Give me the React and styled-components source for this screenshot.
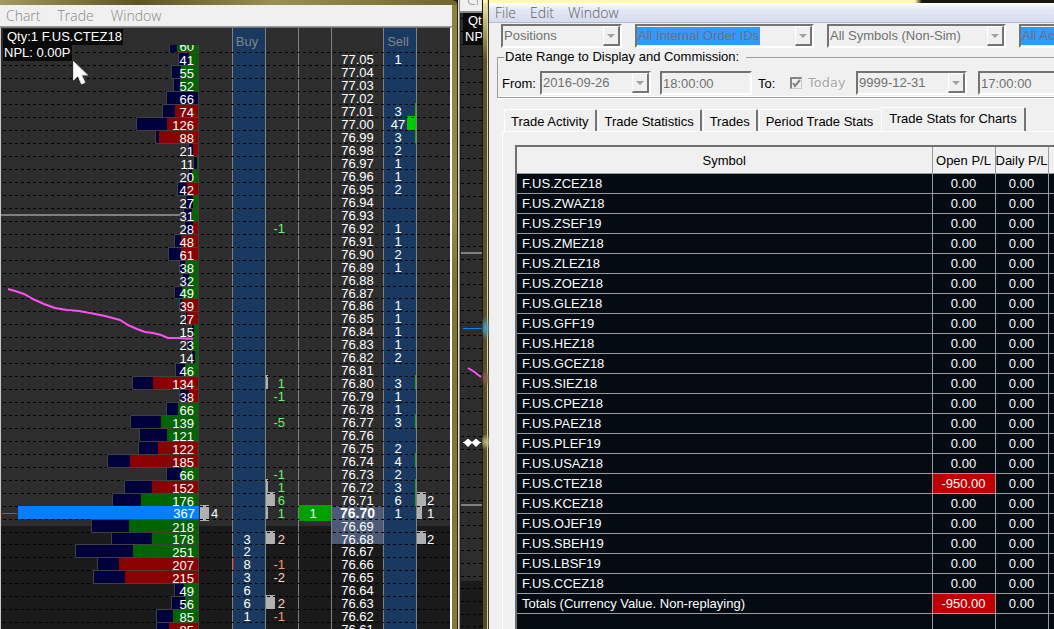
import React from "react";
import styled, { createGlobalStyle, css } from "styled-components";

const GlobalStyle = createGlobalStyle`
  * {
    box-sizing: border-box;
  }
  body {
    margin: 0;
    overflow: hidden;
    background: #1a1a1a;
    font-family: "Liberation Sans", Arial, sans-serif;
    font-size: 13px;
    color: #000;
  }
`;

const Desktop = styled.div`
  display: grid;
  grid-template-columns: 458fr 24px 572fr;
  height: 100vh;
`;

/* ---------- chart window ---------- */

const ChartWindow = styled.section`
  display: flex;
  flex-direction: column;
  min-width: 0;
  height: 100vh;
  overflow: hidden;
  padding: 5px 6px 0 0;
  border-radius: 0 6px 0 0;
  background:
    linear-gradient(90deg, transparent calc(100% - 1px), #2b2612 0),
    linear-gradient(90deg, #a49a5c, #5d5420 30%, #9a9050 60%, #70662a) 0 0 / 100% 5px no-repeat,
    linear-gradient(#8a803f, #958a4a 35%, #7d732f 45%, #857a35);
`;

const MenuBar = styled.nav`
  display: flex;
  align-items: center;
  gap: ${(p) => p.$gap}px;
  flex: none;
  height: ${(p) => p.$height}px;
  padding: 0 6px;
  background: ${(p) => p.$background};
  border-bottom: 1px solid ${(p) => p.$line};
`;

const MenuItem = styled.button`
  padding: 0;
  border: 0;
  background: none;
  color: ${(p) => p.$color || "#888"};
  font: 300 14px/20px "Open Sans", "Noto Sans", sans-serif;
`;

const Ladder = styled.div`
  position: relative;
  flex: 1;
  min-height: 0;
  overflow: hidden;
  border-top: 1px solid #777;
  border-left: 1px solid #c8c8c8;
  border-right: 2px solid #fff;
  background: #1a1a1a;
  color: #fff;
`;

const columns = "minmax(0, 1fr) 33px 33px 33px 52px 33px 34px";

const shades = {
  light: "#2d2d2d",
  split: "linear-gradient(#2d2d2d 7px, #1a1a1a 7px)",
  dark: "#1a1a1a",
};

const LadderRow = styled.div`
  position: relative;
  display: grid;
  grid-template-columns: ${columns};
  grid-template-rows: 100%;
  height: ${(p) => (p.$short ? 12 : 13)}px;
  line-height: 15px;
  background: ${(p) => shades[p.$shade]};
  &::after {
    content: "";
    position: absolute;
    z-index: 1;
    top: 0;
    left: 2px;
    right: 0;
    height: 1px;
    background: repeating-linear-gradient(90deg, #000 0 3px, transparent 3px 6px);
  }
`;

const LadderHead = styled.div`
  display: grid;
  grid-template-columns: ${columns};
  grid-template-rows: 100%;
  height: 24px;
  line-height: 28px;
  background: #2d2d2d;
  color: #858585;
  text-align: center;
`;

const Cell = styled.div`
  position: relative;
  border-left: 1px solid #808080;
  text-align: center;
  white-space: nowrap;
  ${(p) => p.$blue && "background: #193961;"}
  ${(p) => p.$marked && "background: #4d5a76;"}
  ${(p) => p.$nudge && `padding-right: ${p.$nudge}px;`}
`;

const VolumeCell = styled.div`
  display: flex;
  justify-content: flex-end;
  align-items: flex-end;
  padding-right: 33px;
  position: relative;
  color: #fff;
`;

const fills = { g: "#006400", r: "#8b0000" };

const Bar = styled.div`
  position: relative;
  z-index: 2;
  display: flex;
  flex: none;
  height: calc(100% + 1px);
  margin-bottom: -1px;
  border: 1px solid #404040;
  background: #00003c;
  ${(p) =>
    p.$active &&
    css`
      height: 13px;
      margin: 0;
      border: 0;
      background: #0080ff;
    `}
`;

const BarSide = styled.div`
  margin-left: auto;
  background: ${(p) => fills[p.$fill]};
`;

const BarNumber = styled.span`
  position: absolute;
  right: 4px;
  top: 0;
  line-height: ${(p) => (p.$tight ? 13 : 15)}px;
`;

const HeadClip = styled.div`
  display: flex;
  align-items: flex-end;
  height: 7px;
  overflow: hidden;
  && > div {
    height: 14px;
  }
`;

const Block = styled.i`
  position: absolute;
  top: -1px;
  ${(p) => p.$side || "left"}: 0;
  width: ${(p) => p.$width}px;
  height: 16px;
  background: ${(p) => p.$color || "#b0b0b0"};
`;

const Delta = styled.span`
  position: absolute;
  z-index: 2;
  ${(p) => (p.$left ? `left: ${p.$left}px;` : "right: 13px;")}
  color: ${(p) => p.$color || "#fff"};
`;

const Filled = styled.div`
  position: absolute;
  z-index: 2;
  inset: -1px 0;
  height: 16px;
  padding-right: 4px;
  line-height: 17px;
  background: #00a000;
`;

const Price = styled.span`
  ${(p) => p.$last && "position: relative; z-index: 2; font-size: 14px; font-weight: 700;"}
`;

const Label = styled.div`
  position: absolute;
  z-index: 3;
  top: ${(p) => p.$top}px;
  left: 2px;
  padding: 0 1px 0 ${(p) => p.$pad}px;
  background: #0a0a0a;
  color: #fff;
  line-height: 16px;
  white-space: nowrap;
`;

const Overlay = styled.svg`
  position: absolute;
  z-index: 3;
  top: 0;
  left: 0;
  pointer-events: none;
`;

// volume, width of the coloured side, colour
const volumes = [
  [41, 9, "g"], [55, 17, "g"], [52, 18, "g"], [66, 0, "g"], [74, 23, "r"],
  [126, 31, "r"], [88, 39, "r"], [21, 5, "r"], [11, 1, "g"], [20, 6, "g"],
  [42, 11, "r"], [27, 5, "g"], [31, 6, "g"], [28, 5, "r"], [48, 17, "r"],
  [61, 17, "r"], [38, 13, "g"], [32, 9, "g"], [49, 16, "g"], [39, 16, "r"],
  [27, 11, "r"], [15, 4, "g"], [23, 7, "g"], [14, 3, "g"], [46, 13, "g"],
  [134, 45, "r"], [38, 9, "r"], [66, 20, "g"], [139, 37, "g"], [121, 31, "g"],
  [122, 40, "r"], [185, 68, "r"], [66, 16, "g"], [152, 46, "r"], [176, 57, "g"],
  [367, 0, "g"], [218, 69, "g"], [178, 46, "g"], [251, 65, "g"], [207, 79, "r"],
  [215, 73, "r"], [49, 14, "g"], [56, 13, "g"], [85, 25, "g"], [85, 29, "r"],
];

const sells = {
  7705: 1, 7701: 3, 7700: 47, 7699: 3, 7698: 2, 7697: 1, 7696: 1, 7695: 2,
  7692: 1, 7691: 1, 7690: 2, 7689: 1, 7686: 1, 7685: 1, 7684: 1, 7683: 1,
  7682: 2, 7680: 3, 7679: 1, 7678: 1, 7677: 3, 7675: 2, 7674: 4, 7673: 2,
  7672: 3, 7671: 6, 7670: 1,
};

const sellMarks = {
  7701: 1, 7700: 9, 7699: 1, 7680: 1, 7677: 1, 7674: 1, 7672: 1, 7671: 1,
};

const buys = { 7668: 3, 7667: 2, 7666: 8, 7665: 3, 7664: 6, 7663: 6, 7662: 1 };

const green = "#66f266";
const peach = "#ffd2c4";
const orange = "#ff9468";

// text, colour, block width
const deltas = {
  7692: ["-1", green, 0],
  7680: ["1", green, 2],
  7679: ["-1", green, 0],
  7677: ["-5", green, 0],
  7673: ["-1", green, 0],
  7672: ["1", green, 2],
  7671: ["6", green, 9],
  7670: ["1", green, 2],
  7668: ["2", peach, 9],
  7666: ["-1", orange, 0],
  7665: ["-2", peach, 0],
  7663: ["2", peach, 9],
  7662: ["-1", orange, 0],
};

const pulls = { 7671: [2, 9], 7670: [1, 5], 7668: [2, 9] };

const Volume = ({ data: [volume, side, fill], short }) => (
  <Bar $active={volume === 367} style={{ width: Math.round(volume * 0.49) + 1 }}>
    <BarSide $fill={fill} style={{ width: side }} />
    <BarNumber $tight={short}>{volume}</BarNumber>
  </Bar>
);

const rows = volumes.map((data, i) => {
  const price = 7705 - i;
  return {
    price,
    data,
    short: price === 7687 || price === 7668,
    shade: price > 7669 ? "light" : price === 7669 ? "split" : "dark",
  };
});

const PriceLadder = () => (
  <Ladder>
    <LadderHead>
      <VolumeCell>
        <HeadClip>
          <Volume data={[60, 21, "g"]} short />
        </HeadClip>
      </VolumeCell>
      <Cell $blue $nudge={4}>Buy</Cell>
      <Cell />
      <Cell />
      <Cell />
      <Cell $blue $nudge={4}>Sell</Cell>
      <Cell />
    </LadderHead>
    {rows.map(({ price, data, short, shade }) => {
      const delta = deltas[price];
      const pull = pulls[price];
      return (
        <LadderRow key={price} $short={short} $shade={shade}>
          <VolumeCell>
            <Volume data={data} short={short} />
          </VolumeCell>
          <Cell $blue $nudge={4}>
            {price === 7666 && <Block $width={1} $color="#d01020" />}
            {buys[price]}
          </Cell>
          <Cell>
            {delta && delta[2] > 0 && <Block $width={delta[2]} />}
            {delta && <Delta $color={delta[1]}>{delta[0]}</Delta>}
          </Cell>
          <Cell>{price === 7670 && <Filled>1</Filled>}</Cell>
          <Cell $marked={price <= 7670 && price >= 7668}>
            <Price $last={price === 7670}>{(price / 100).toFixed(2)}</Price>
          </Cell>
          <Cell $blue $nudge={4}>
            {sellMarks[price] && (
              <Block $side="right" $width={sellMarks[price]} $color={sellMarks[price] > 1 ? "#00c800" : "#20a020"} />
            )}
            {sells[price]}
          </Cell>
          <Cell>
            {pull && <Block $width={pull[1]} />}
            {pull && <Delta $left={10}>{pull[0]}</Delta>}
          </Cell>
        </LadderRow>
      );
    })}
    <Label $top={1} $pad={4}>Qty:1 F.US.CTEZ18</Label>
    <Label $top={17} $pad={1}>NPL: 0.00P</Label>
    <Overlay width="232" height="601">
      <path d="M0 187H179" stroke="#808080" strokeWidth="2" />
      <path d="M1 485.500H16" stroke="#0080ff" />
      <rect x="199" y="477" width="9" height="16" fill="#b0b0b0" />
      <path d="M199 478.500h9M199 491.500h9" stroke="#000" strokeDasharray="3 3" />
      <text x="210" y="490" fill="#fff">4</text>
      <path
        d="M7 261L14 263L23 266L32 271L43 276L54 280L66 282L78 283L89 285L104 288L119 292L127 297L136 301L144 304L152 305L160 307L167 310L178 310L192 311"
        fill="none"
        stroke="#ff50f0"
        strokeWidth="2"
      />
      <path d="M72.500 33.500v18.500l4.500-4 3.500 8 3.500-1.500-3.500-7.500h6z" fill="#fff" stroke="#ddd" />
    </Overlay>
  </Ladder>
);

/* ---------- chart window behind ---------- */

const BackWindow = styled.section`
  display: flex;
  flex-direction: column;
  min-width: 0;
  height: 100vh;
  overflow: hidden;
  padding-left: 1px;
  border-left: 1px solid #dcdcd4;
  background: #8a8a8a;
`;

const BackMenu = styled.div`
  flex: none;
  height: 11px;
  overflow: hidden;
  padding-left: 7px;
  background: #f0f0f0;
  color: #888;
  font: 300 14px/20px "Open Sans", "Noto Sans", sans-serif;
  & span {
    display: block;
    margin-top: -10px;
  }
`;

const BackChart = styled.div`
  position: relative;
  flex: 1;
  margin-top: 2px;
  border-left: 1px solid #222;
  overflow: hidden;
  background: linear-gradient(#2d2d2d 568px, #1a1a1a 568px);
`;

const BackRow = styled.div`
  height: 13px;
  &:nth-child(3n) {
    height: 12px;
  }
  background: repeating-linear-gradient(90deg, #000 0 3px, transparent 3px 6px) 0 0 / 100% 1px no-repeat;
`;

const BackRows = styled.div`
  padding-top: 5px;
`;

const BackChartWindow = () => (
  <BackWindow>
    <BackMenu>
      <span>Chart</span>
    </BackMenu>
    <BackChart>
      <BackRows>
        {Array.from({ length: 49 }, (_, i) => (
          <BackRow key={i} />
        ))}
      </BackRows>
      <Label $top={0} $pad={5}>Qty</Label>
      <Label $top={16} $pad={2}>NPL</Label>
      <Overlay width="22" height="616">
        <path d="M0 240h22M0 492h22" stroke="#808080" strokeWidth="2" />
        <path d="M2 315.500h20" stroke="#0080ff" />
        <path d="M7 355l5 3 8 6" fill="none" stroke="#ff50f0" strokeWidth="2" />
        <path d="M2 429.500h18M7 426l4 3.500-4 4-4-4zM15 426l4 3.500-4 4-4-4z" fill="#fff" stroke="#fff" />
      </Overlay>
    </BackChart>
  </BackWindow>
);

/* ---------- trade activity window ---------- */

const TradeWindow = styled.section`
  min-width: 0;
  height: 100vh;
  overflow: hidden;
  padding: 3px 0 0 7px;
  background:
    radial-gradient(ellipse 6px 12px at 4px 328px, #4aa3c4, transparent),
    radial-gradient(ellipse 6px 9px at 4px 378px, #8a5c52, transparent),
    radial-gradient(ellipse 7px 8px at 4px 442px, #c8bd80, transparent),
    linear-gradient(90deg, #1c1a10 1px, transparent 1px 5px, #d6d0b8 5px 6px, #3c3820 6px 7px, transparent 7px),
    linear-gradient(90deg, #fff9b0 433px, #1c1808 440px) 0 0 / 100% 3px no-repeat,
    linear-gradient(#f6efa8, #5d5328 60px, #544b20);
`;

const TradeInner = styled.div`
  display: flex;
  flex-direction: column;
  height: 100%;
  background: #f0f0f0;
  white-space: nowrap;
`;

const Filters = styled.form`
  padding: 1px 0 0 12px;
`;

const FilterRow = styled.div`
  display: flex;
  align-items: center;
  gap: ${(p) => p.$gap}px;
`;

const sunken = css`
  height: 24px;
  flex: none;
  border: 2px solid;
  border-color: #747474 #fff #fff #747474;
  background: #f0f0f0;
  color: #707070;
  font: 13px/18px "Liberation Sans", Arial, sans-serif;
`;

const Combo = styled.label`
  ${sunken}
  position: relative;
  display: flex;
  align-items: center;
  width: ${(p) => p.$width}px;
`;

const Select = styled.select`
  appearance: none;
  field-sizing: content;
  margin: 0;
  padding: 0 1px;
  border: 0;
  opacity: 1;
  font: inherit;
  color: #707070;
  background: ${(p) => (p.$selected ? "#3399ff" : "transparent")};
`;

const Arrow = styled.span`
  display: flex;
  align-items: center;
  justify-content: center;
  flex: none;
  width: 17px;
  height: 20px;
  margin-left: auto;
  border: 1px solid;
  border-color: #fff #747474 #747474 #fff;
  border-width: 1px 2px 2px 1px;
  background: #f0f0f0;
`;

const Time = styled.input`
  ${sunken}
  width: 92px;
  padding: 0 1px;
  margin-left: ${(p) => p.$before}px;
`;

const DateGroup = styled.fieldset`
  min-width: 0;
  margin: 0 -4px;
  padding: 5px 0 2px 4px;
  height: 50px;
  border: 1px solid #9c9c9c;
  box-shadow: inset 0 -1px #fff, 0 1px #fff;
  overflow: hidden;
`;

const Legend = styled.legend`
  margin-left: 2px;
  padding: 0 7px 0 1px;
  line-height: 18px;
`;

const FieldName = styled.span`
  width: 38px;
  flex: none;
  padding-left: ${(p) => p.$before || 0}px;
`;

const Today = styled.label`
  display: flex;
  align-items: center;
  gap: 6px;
  width: 66px;
  flex: none;
  color: #a8a8a8;
  font: 13px/16px "DejaVu Sans", sans-serif;
  text-shadow: 1px 1px #fff;
  & input {
    appearance: none;
    width: 12px;
    height: 12px;
    margin: 0;
    border: 2px solid #858585;
    border-right: 1px solid #ccc;
    border-bottom: 1px solid #ccc;
  }
  & svg {
    position: absolute;
    margin-left: 2px;
  }
`;

const TabList = styled.div`
  display: flex;
  align-items: flex-end;
  height: 24px;
  margin: 9px 0 0 15px;
`;

const Tab = styled.button`
  height: ${(p) => (p.$active ? 24 : 22)}px;
  padding: ${(p) => (p.$active ? "0 7px 2px" : "2px 6px 0")};
  border: 0;
  border-top: 1px solid #fff;
  border-left: 1px solid #fff;
  border-right: ${(p) => (p.$last ? "0" : "2px solid #747474")};
  border-radius: 2px 2px 0 0;
  margin-right: ${(p) => (p.$last ? 2 : 1)}px;
  background: #f0f0f0;
  color: #000;
  font: 13px/16px "Liberation Sans", Arial, sans-serif;
`;

const TabPanel = styled.div`
  flex: 1;
  min-height: 0;
  margin-left: 13px;
  padding: 13px 0 0 12px;
  border-top: 1px solid #fff;
  border-left: 1px solid #fff;
  overflow: hidden;
`;

const TableBox = styled.div`
  height: 100%;
  overflow: hidden;
  border-top: 2px solid #707070;
  border-left: 2px solid #707070;
  background: #040b12;
`;

const Table = styled.table`
  width: 595px;
  table-layout: fixed;
  border-collapse: collapse;
  th,
  td {
    height: 20px;
    padding: 1px 0 0;
    border-right: 1px solid #9a9a9a;
    border-bottom: 1px solid #9a9a9a;
    text-align: center;
    line-height: 16px;
    color: #fff;
  }
  th {
    height: 26px;
    padding: 2px 0 0;
    background: #f0f0f0;
    color: #000;
    font-weight: 400;
    overflow: hidden;
  }
  td:first-child {
    padding-left: 5px;
    text-align: left;
  }
`;

const Amount = styled.td`
  background: ${(p) => (p.$loss ? "#c00000" : "none")};
`;

const symbols = [
  "ZCEZ18", "ZWAZ18", "ZSEF19", "ZMEZ18", "ZLEZ18", "ZOEZ18", "GLEZ18",
  "GFF19", "HEZ18", "GCEZ18", "SIEZ18", "CPEZ18", "PAEZ18", "PLEF19",
  "USAZ18", "CTEZ18", "KCEZ18", "OJEF19", "SBEH19", "LBSF19", "CCEZ18",
];

const stats = symbols
  .map((symbol) => ({
    name: "F.US." + symbol,
    open: symbol === "CTEZ18" ? "-950.00" : "0.00",
  }))
  .concat({ name: "Totals (Currency Value. Non-replaying)", open: "-950.00" });

const ComboBox = ({ label, value, width, selected }) => (
  <Combo $width={width}>
    <Select aria-label={label} disabled $selected={selected}>
      <option>{value}</option>
    </Select>
    <Arrow>
      <svg width="8" height="4">
        <path d="M0 0h8L4 4z" fill="#a0a0a0" />
      </svg>
    </Arrow>
  </Combo>
);

const tabs = ["Trade Activity", "Trade Statistics", "Trades", "Period Trade Stats", "Trade Stats for Charts"];

const TradeActivity = () => (
  <TradeWindow>
    <TradeInner>
      <MenuBar $height={20} $gap={14} $line="#b4bbd0" $background="linear-gradient(#fff, #e3e8f5 35%, #d5dcee)">
        {["File", "Edit", "Window"].map((name) => (
          <MenuItem key={name} $color="#5d5d5d">{name}</MenuItem>
        ))}
      </MenuBar>
      <Filters>
        <FilterRow $gap={13}>
          <ComboBox label="View" value="Positions" width={121} />
          <ComboBox label="Order IDs" value="All Internal Order IDs" width={179} selected />
          <ComboBox label="Symbols" value="All Symbols (Non-Sim)" width={179} />
          <ComboBox label="Accounts" value="All Accounts" width={179} selected />
        </FilterRow>
        <DateGroup>
          <Legend>Date Range to Display and Commission:</Legend>
          <FilterRow $gap={0}>
            <FieldName>From:</FieldName>
            <ComboBox label="From date" value="2016-09-26" width={111} />
            <Time aria-label="From time" disabled defaultValue="18:00:00" $before={9} />
            <FieldName $before={6}>To:</FieldName>
            <Today>
              <input type="checkbox" defaultChecked disabled />
              <svg width="9" height="9">
                <path d="M1 4l2 3 5-6" fill="none" stroke="#858585" strokeWidth="2" />
              </svg>
              Today
            </Today>
            <ComboBox label="To date" value="9999-12-31" width={111} />
            <Time aria-label="To time" disabled defaultValue="17:00:00" $before={11} />
          </FilterRow>
        </DateGroup>
      </Filters>
      <TabList role="tablist">
        {tabs.map((name, i) => (
          <Tab key={name} role="tab" aria-selected={i === 4} $active={i === 4} $last={i === 3}>
            {name}
          </Tab>
        ))}
      </TabList>
      <TabPanel role="tabpanel">
        <TableBox>
          <Table>
            <colgroup>
              <col style={{ width: 415 }} />
              <col style={{ width: 63 }} />
              <col style={{ width: 53 }} />
              <col />
            </colgroup>
            <thead>
              <tr>
                <th>Symbol</th>
                <th>Open P/L</th>
                <th>Daily P/L</th>
                <th>Fills P/L</th>
              </tr>
            </thead>
            <tbody>
              {stats.map(({ name, open }) => (
                <tr key={name}>
                  <td>{name}</td>
                  <Amount $loss={open !== "0.00"}>{open}</Amount>
                  <td>0.00</td>
                  <td />
                </tr>
              ))}
              <tr>
                <td />
                <td />
                <td />
                <td />
              </tr>
            </tbody>
          </Table>
        </TableBox>
      </TabPanel>
    </TradeInner>
  </TradeWindow>
);

export default function App() {
  return (
    <>
      <GlobalStyle />
      <Desktop>
        <ChartWindow>
          <MenuBar $height={22} $gap={17} $line="#999" $background="#f0f0f0">
            {["Chart", "Trade", "Window"].map((name) => (
              <MenuItem key={name}>{name}</MenuItem>
            ))}
          </MenuBar>
          <PriceLadder />
        </ChartWindow>
        <BackChartWindow />
        <TradeActivity />
      </Desktop>
    </>
  );
}
